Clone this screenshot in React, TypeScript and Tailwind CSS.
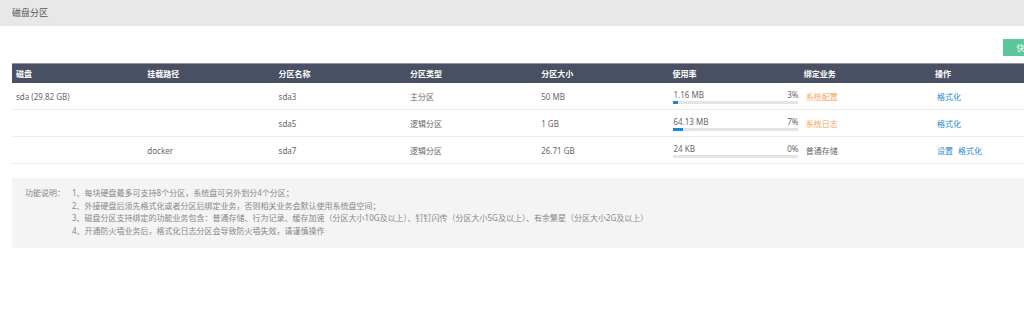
import React from "react";

const rows = [
  { disk: "sda (29.82 GB)", mount: "", name: "sda3", type: "主分区", size: "50 MB", used: "1.16 MB", pct: 3, biz: "系统配置", bizColor: "text-[#f5a55f]", ops: ["格式化"] },
  { disk: "", mount: "", name: "sda5", type: "逻辑分区", size: "1 GB", used: "64.13 MB", pct: 7, biz: "系统日志", bizColor: "text-[#f5a55f]", ops: ["格式化"] },
  { disk: "", mount: "docker", name: "sda7", type: "逻辑分区", size: "26.71 GB", used: "24 KB", pct: 0, biz: "普通存储", bizColor: "text-[#666]", ops: ["设置", "格式化"] },
];

const headers = ["磁盘", "挂载路径", "分区名称", "分区类型", "分区大小", "使用率", "绑定业务", "操作"];

const notes = [
  "1、每块硬盘最多可支持8个分区，系统盘可另外划分4个分区；",
  "2、外接硬盘后须先格式化或者分区后绑定业务，否则相关业务会默认使用系统盘空间；",
  "3、磁盘分区支持绑定的功能业务包含：普通存储、行为记录、缓存加速（分区大小10G及以上）、钉钉闪传（分区大小5G及以上）、有余繁星（分区大小2G及以上）",
  "4、开通防火墙业务后，格式化日志分区会导致防火墙失效，请谨慎操作",
];

export default function App() {
  return (
    <div
      className="w-[1024px] h-[313px] overflow-hidden bg-white text-[#666]"
      style={{ fontFamily: '"Noto Sans", "Noto Sans CJK SC", sans-serif' }}
    >
      <div className="w-[1100px]">
        <div className="h-[26px] bg-[#e8e8e8] flex items-center pl-[12px] text-[9px] text-[#555]">磁盘分区</div>
        <div className="w-[1062px] pl-[12px]">
          <div className="flex justify-end pt-[13px] pb-[7px]">
            <div className="h-[17px] w-[59px] bg-[#5cc798] text-white text-[8px] flex items-center justify-center">快速分区</div>
          </div>
          <div className="grid grid-cols-[repeat(8,131.3px)] h-[20px] bg-[#4a5064] border-t border-[#8e94a3] text-white text-[8px] font-bold items-center">
            {headers.map((h) => (
              <div key={h} className="pl-[4px]">{h}</div>
            ))}
          </div>
          {rows.map((r, i) => (
            <div key={i} className="grid grid-cols-[repeat(8,131.3px)] h-[27px] border-b border-[#ebebeb] text-[8px] items-center">
              <div className="pl-[4px] pt-[2px]">{r.disk}</div>
              <div className="pl-[4px] pt-[2px]">{r.mount}</div>
              <div className="pl-[4px] pt-[2px]">{r.name}</div>
              <div className="pl-[4px] pt-[2px]">{r.type}</div>
              <div className="pl-[4px] pt-[2px]">{r.size}</div>
              <div className="pl-[5px] pt-[1px]">
                <div className="w-[125px]">
                  <div className="flex justify-between leading-[10px]">
                    <span>{r.used}</span>
                    <span>{r.pct}%</span>
                  </div>
                  <div className="h-[3px] bg-[#e4e4e4] mt-[1px]">
                    <div className="h-full bg-[#1b86d3]" style={{ width: `${r.pct === 0 ? 0 : r.pct === 3 ? 3.5 : 7.5}%` }} />
                  </div>
                </div>
              </div>
              <div className={`pl-[6px] pt-[2px] ${r.bizColor}`}>{r.biz}</div>
              <div className="pl-[6px] pt-[2px] flex gap-[5px] text-[#2b8ad1]">
                {r.ops.map((o) => (
                  <span key={o}>{o}</span>
                ))}
              </div>
            </div>
          ))}
          <div className="mt-[14px] bg-[#f4f4f4] pt-[9px] pb-[10px] pl-[13px] flex text-[8px] text-[#888] leading-[12.7px]">
            <div className="w-[47px]">功能说明：</div>
            <div>
              {notes.map((n) => (
                <div key={n}>{n}</div>
              ))}
            </div>
          </div>
        </div>
      </div>
    </div>
  );
}
